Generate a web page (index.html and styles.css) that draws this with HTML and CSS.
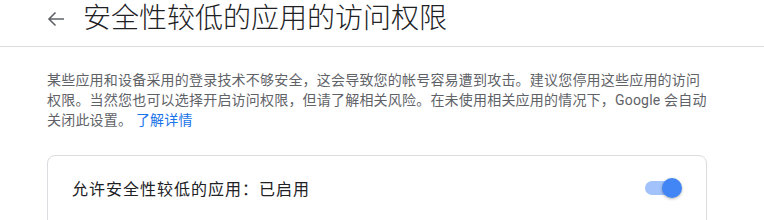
FILE: index.html
```html
<!DOCTYPE html>
<html lang="zh-CN">
<head>
<meta charset="utf-8">
<title>安全性较低的应用的访问权限</title>
<link rel="stylesheet" href="styles.css">
</head>
<body>
<header class="topbar">
  <span class="back" aria-label="返回">
    <svg width="24" height="24" viewBox="0 0 24 24"><path d="M20 12H5M11.5 5.5L5 12l6.5 6.5" fill="none" stroke="#5f6368" stroke-width="1.6"/></svg>
  </span>
  <h1 class="title">安全性较低的应用的访问权限</h1>
</header>
<main class="content">
  <p class="desc">某些应用和设备采用的登录技术不够安全，这会导致您的帐号容易遭到攻击。建议您停用这些应用的访问权限。当然您也可以选择开启访问权限，但请了解相关风险。在未使用相关应用的情况下，Google 会自动关闭此设置。 <a class="link" href="#">了解详情</a></p>
  <section class="card">
    <div class="row">
      <span class="label">允许安全性较低的应用：已启用</span>
      <span class="switch" role="switch" aria-checked="true">
        <span class="track"></span>
        <span class="knob"></span>
      </span>
    </div>
  </section>
</main>
</body>
</html>
```
FILE: styles.css
```css
html, body {
  margin: 0;
  padding: 0;
  background: #ffffff;
}
body {
  font-family: Roboto, "Noto Sans CJK SC", "Liberation Sans", sans-serif;
  color: #202124;
  width: 764px;
  height: 220px;
  overflow: hidden;
}
.topbar {
  display: flex;
  align-items: center;
  height: 46px;
  padding-left: 44px;
  border-bottom: 1px solid #dadce0;
}
.back {
  display: flex;
  width: 24px;
  height: 24px;
  margin-top: -8px;
}
.title {
  margin: -8px 0 0 15px;
  font-size: 28px;
  font-weight: 300;
  line-height: 38px;
  color: #202124;
}
.content {
  padding-left: 47px;
  width: 660px;
}
.desc {
  margin: 23px 0 0 0;
  font-size: 14px;
  line-height: 20px;
  letter-spacing: 0.2px;
  color: #5f6368;
}
.link {
  color: #1a73e8;
  text-decoration: none;
}
.card {
  margin-top: 25px;
  border: 1px solid #dadce0;
  border-radius: 8px;
  height: 100px;
}
.row {
  display: flex;
  align-items: center;
  justify-content: space-between;
  height: 66px;
  padding: 0 24px;
}
.label {
  font-size: 16px;
  letter-spacing: 1px;
  line-height: 24px;
  color: #202124;
  margin-top: 2px;
}
.switch {
  position: relative;
  width: 37px;
  height: 20px;
  margin-top: -2px;
}
.track {
  position: absolute;
  left: 0;
  top: 3px;
  width: 34px;
  height: 14px;
  border-radius: 7px;
  background: #a1c2fa;
}
.knob {
  position: absolute;
  right: 0;
  top: 0;
  width: 20px;
  height: 20px;
  border-radius: 50%;
  background: #4285f4;
  box-shadow: 0 1px 3px rgba(0,0,0,0.3);
}
```
